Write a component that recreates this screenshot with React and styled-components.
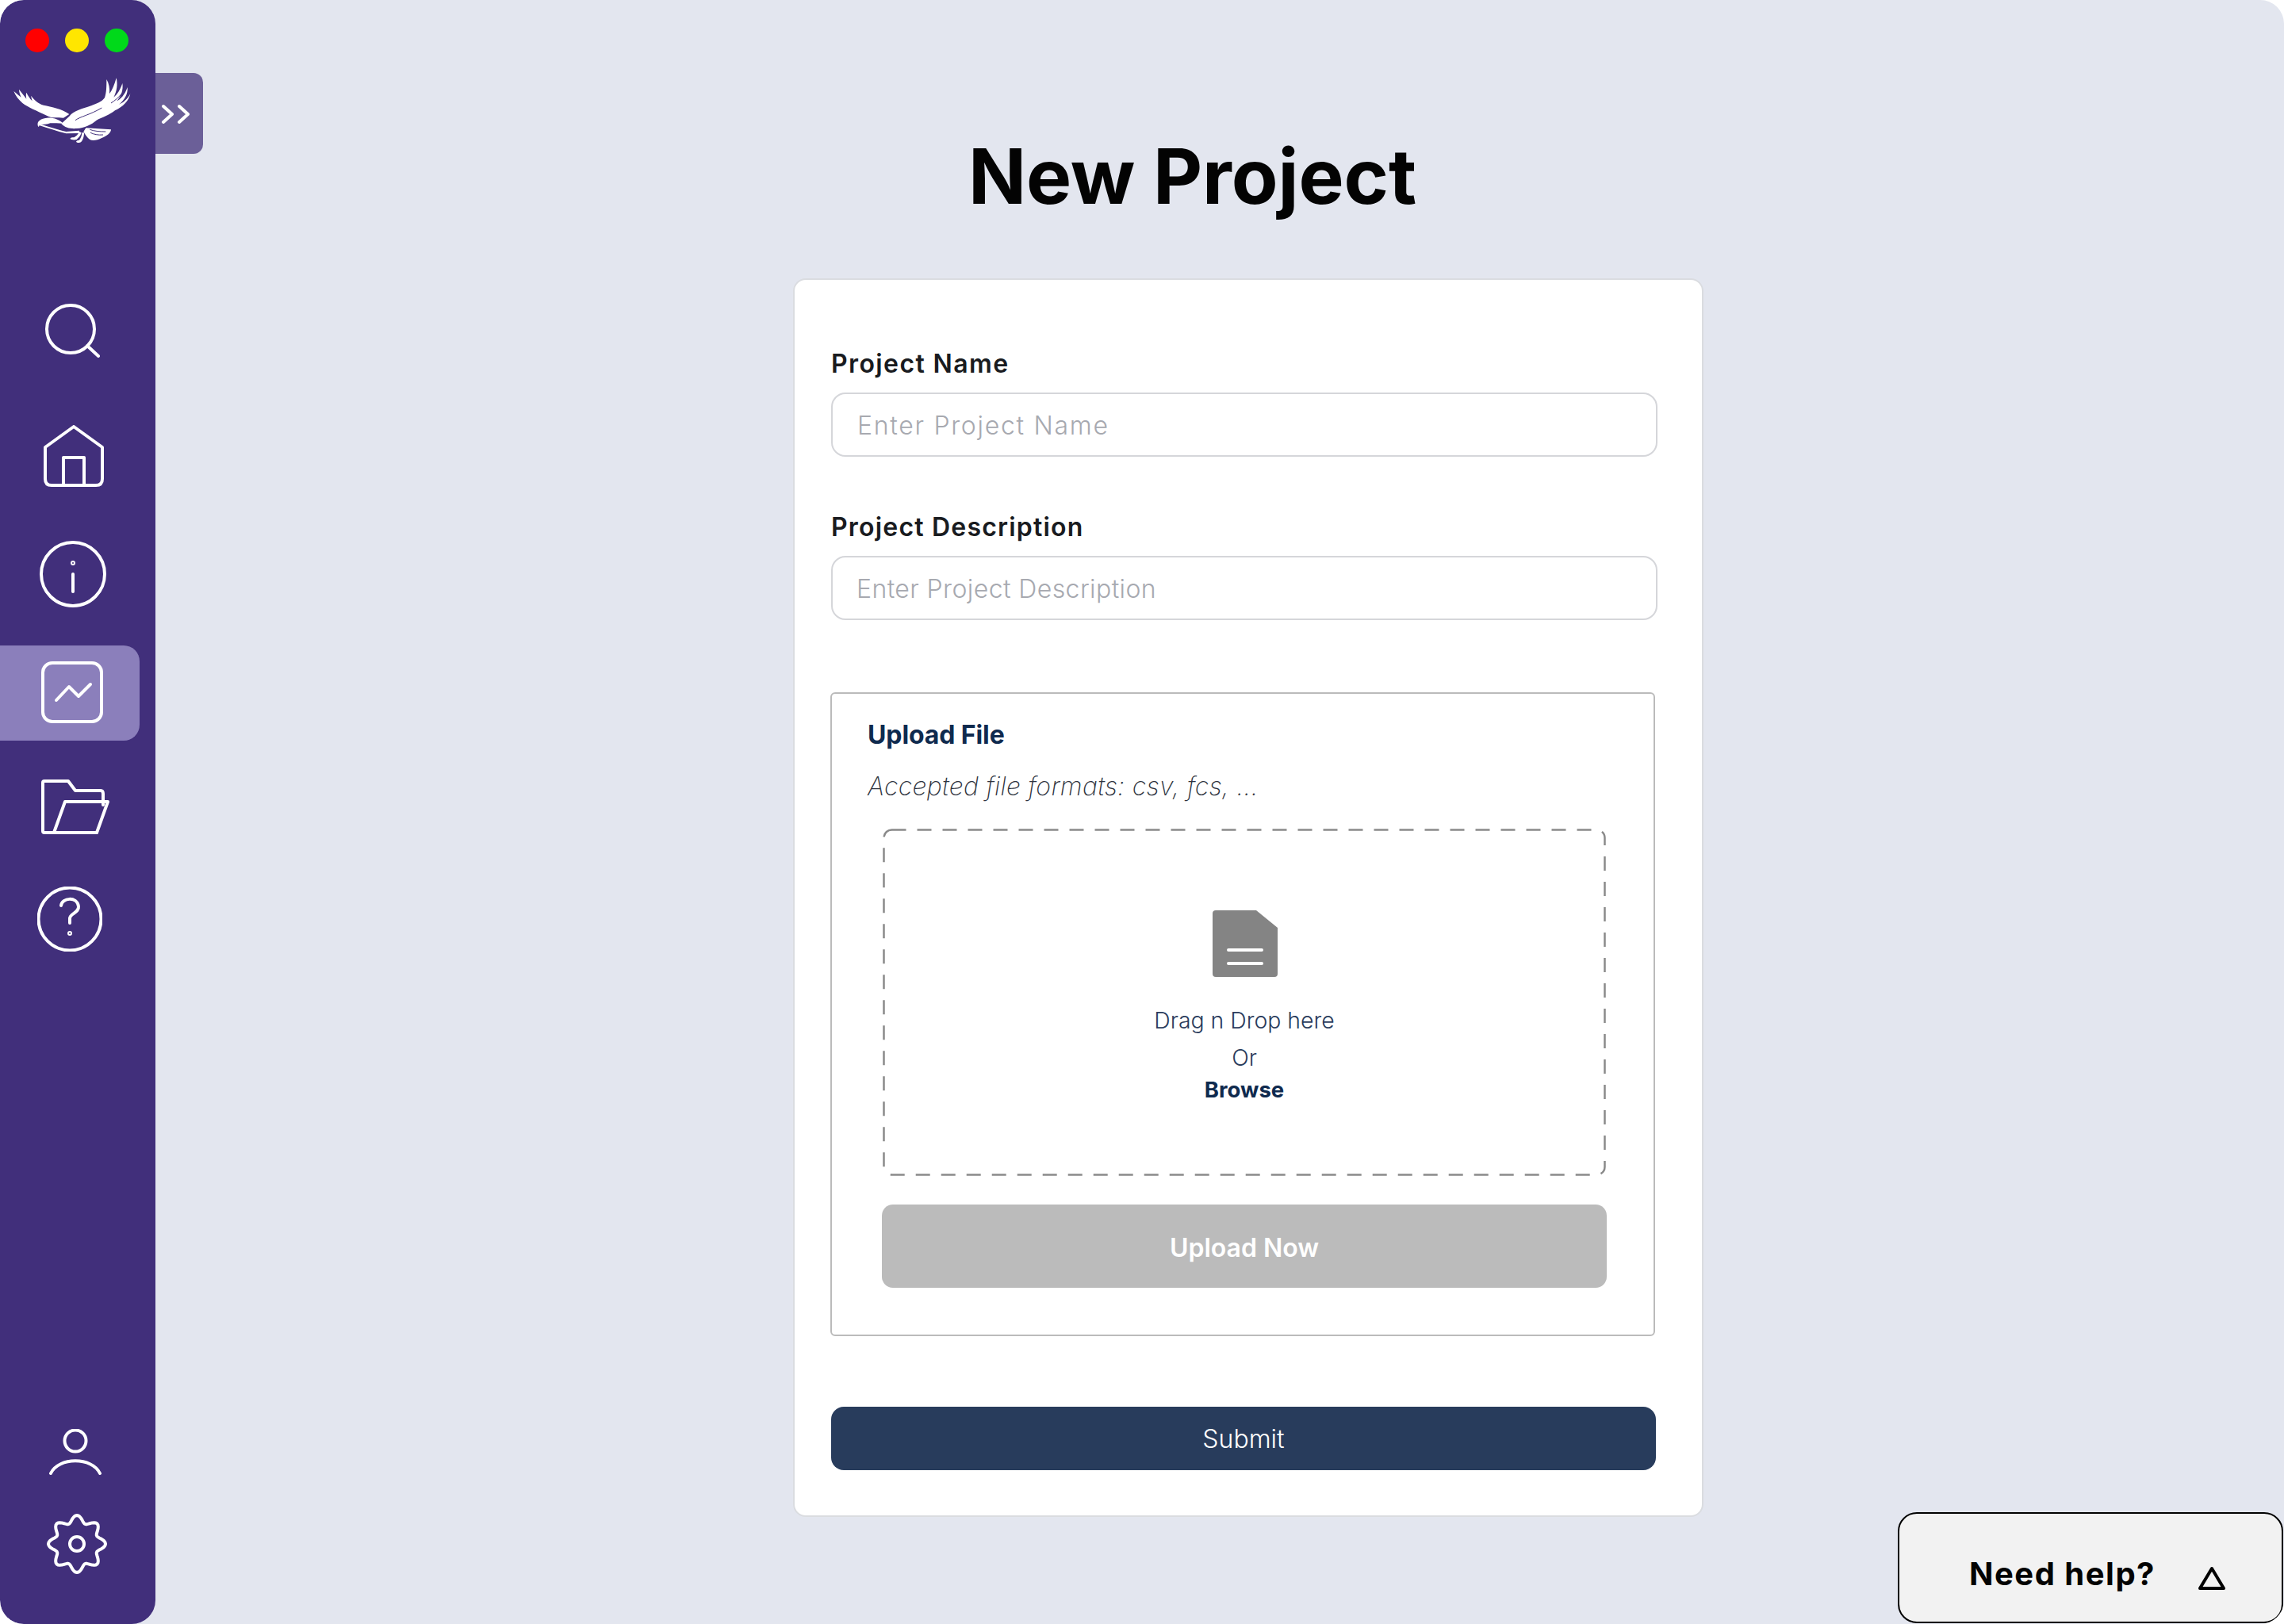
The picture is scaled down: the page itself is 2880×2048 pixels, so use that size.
import React from 'react';
import styled, { createGlobalStyle } from 'styled-components';

const GlobalStyle = createGlobalStyle`
  html, body {
    margin: 0;
    padding: 0;
    background: #fff;
  }
  * {
    box-sizing: border-box;
  }
`;

// Window
const Window = styled.div`
  position: relative;
  display: flex;
  width: 2880px;
  height: 2048px;
  overflow: hidden;
  border-radius: 30px;
  background: #e3e6ef;
  font-family: Inter, "Liberation Sans", sans-serif;
`;

// Sidebar
const Sidebar = styled.aside`
  position: relative;
  display: flex;
  flex-direction: column;
  flex: 0 0 196px;
  height: 100%;
  background: #412f7b;
  border-radius: 30px;
`;

const Lights = styled.div`
  display: flex;
  gap: 20px;
  padding: 36px 0 0 32px;
`;

const Light = styled.span`
  width: 30px;
  height: 30px;
  border-radius: 50%;
  background: ${(p) => p.$color};
`;

const Logo = styled.svg`
  display: block;
  width: 180px;
  height: 110px;
  margin-top: 14px;
`;

const Toggle = styled.button`
  position: absolute;
  top: 92px;
  left: 196px;
  display: flex;
  align-items: center;
  justify-content: center;
  width: 60px;
  height: 102px;
  padding: 2px 10px 0 0;
  border: 0;
  border-radius: 0 12px 12px 0;
  background: #6b5f98;
`;

const Nav = styled.nav`
  display: flex;
  flex-direction: column;
`;

const NavItem = styled.div`
  display: flex;
  align-items: center;
  width: ${(p) => (p.$active ? '176px' : '100%')};
  height: ${(p) => p.$height}px;
  margin-top: ${(p) => p.$gap}px;
  padding-left: ${(p) => p.$left}px;
  border-radius: ${(p) => (p.$active ? '0 20px 20px 0' : '0')};
  background: ${(p) => (p.$active ? '#8b7fbb' : 'transparent')};
`;

const SidebarFoot = styled.div`
  display: flex;
  flex-direction: column;
  margin-top: auto;
  padding-bottom: 61px;
`;

const Icon = styled.svg`
  display: block;
  fill: none;
  stroke: #fff;
  stroke-width: 4;
  stroke-linecap: round;
  stroke-linejoin: round;
  margin-top: ${(p) => p.$nudge || 0}px;
`;

// Main column
const Main = styled.main`
  display: flex;
  flex-direction: column;
  flex: 1;
  padding: 164px 0 0 804px;
`;

const Title = styled.h1`
  margin: 0 0 0 221px;
  font-size: 96px;
  line-height: 116px;
  font-weight: 700;
  letter-spacing: -0.1px;
  color: #030303;
  white-space: nowrap;
`;

const Card = styled.section`
  display: flex;
  flex-direction: column;
  width: 1148px;
  margin-top: 71px;
  padding: 86px 55px 57px 46px;
  background: #fff;
  border: 2px solid #dadce0;
  border-radius: 16px;
`;

const Label = styled.label`
  display: block;
  margin: ${(p) => p.$gap || 0}px 0 16px 0;
  font-size: 32px;
  line-height: 40px;
  font-weight: 600;
  letter-spacing: ${(p) => p.$spacing}px;
  color: #191b20;
`;

const TextInput = styled.input`
  display: block;
  width: 1042px;
  height: 81px;
  padding: 2px 30px 0 ${(p) => p.$left || 30}px;
  background: #fff;
  border: 2px solid #d5d6da;
  border-radius: 18px;
  font-family: inherit;
  font-size: 32px;
  font-weight: 300;
  outline: none;

  &::placeholder {
    color: #a7a9b0;
    opacity: 1;
    letter-spacing: ${(p) => p.$spacing || 0}px;
  }
`;

const UploadBox = styled.div`
  width: 1040px;
  height: 812px;
  margin: 91px 0 0 -1px;
  padding: 32px 0 0;
  border: 2px solid #bbbbbb;
  border-radius: 6px;
`;

const UploadTitle = styled.h2`
  margin: 0 0 0 45px;
  font-size: 32px;
  line-height: 40px;
  font-weight: 700;
  letter-spacing: -0.1px;
  color: #0f2a4e;
`;

const Formats = styled.p`
  margin: 25px 0 0 45px;
  font-size: 32px;
  line-height: 40px;
  font-weight: 200;
  font-style: italic;
  letter-spacing: 0.3px;
  color: #2f3440;
`;

const Dropzone = styled.div`
  position: relative;
  display: flex;
  flex-direction: column;
  align-items: center;
  width: 912px;
  height: 438px;
  margin: 33px 0 0 64px;
  padding-top: 103px;
`;

const DashFrame = styled.svg`
  position: absolute;
  top: 0;
  left: 0;
  width: 912px;
  height: 438px;
`;

const DocIcon = styled.svg`
  display: block;
  margin-left: 2px;
`;

const DropText = styled.div`
  margin-top: ${(p) => p.$gap}px;
  font-size: ${(p) => (p.$bold ? 27.5 : 28.4)}px;
  line-height: 36px;
  font-weight: ${(p) => (p.$bold ? 700 : 300)};
  color: ${(p) => (p.$bold ? '#0f2a4e' : '#2a3c5c')};
`;

const UploadButton = styled.button`
  display: block;
  width: 914px;
  height: 105px;
  margin: 36px 0 0 63px;
  padding-top: 5px;
  border: 0;
  border-radius: 14px;
  background: #bbbbbb;
  color: #fff;
  font-family: inherit;
  font-size: 32px;
  font-weight: 600;
`;

const SubmitButton = styled.button`
  display: block;
  width: 1040px;
  height: 80px;
  margin-top: 89px;
  border: 0;
  border-radius: 16px;
  background: #283c5c;
  color: #fff;
  font-family: inherit;
  font-size: 32px;
  font-weight: 300;
`;

// Need help widget
const HelpBox = styled.div`
  position: absolute;
  top: 1907px;
  left: 2393px;
  display: flex;
  align-items: center;
  width: 486px;
  height: 140px;
  padding: 14px 0 0 88px;
  background: #f2f2f2;
  border: 2px solid #000;
  border-radius: 24px;
`;

const HelpText = styled.span`
  font-size: 40px;
  font-weight: 700;
  letter-spacing: 1.5px;
  color: #030303;
`;

const HelpArrow = styled.svg`
  display: block;
  margin: 12px 0 0 53px;
  fill: none;
  stroke: #000;
  stroke-width: 4;
  stroke-linejoin: round;
`;

// 8 lobed gear outline
const gearPath = () => {
  const points = [];
  for (let i = 0; i < 120; i++) {
    const angle = (i / 120) * Math.PI * 2;
    const radius = 31.5 + 4.5 * Math.cos(8 * angle);
    const x = 40 + radius * Math.sin(angle);
    const y = 40 - radius * Math.cos(angle);
    points.push(`${x.toFixed(2)} ${y.toFixed(2)}`);
  }
  return `M${points.join('L')}Z`;
};

function Eagle() {
  return (
    <Logo viewBox="0 0 540 330" aria-label="logo">
      <g fill="#fff">
        <path d="M232 228L262 200C280 178 310 172 345 160C365 152 385 146 396 130C403 110 403 85 403 60C412 75 416 95 414 115C425 100 433 80 440 55C446 80 442 105 430 128C443 118 455 100 463 75C467 100 458 125 442 142C455 136 472 120 482 90C485 115 470 140 450 155C465 150 482 135 493 115C488 140 465 165 435 178C415 195 385 205 365 215C345 232 320 244 290 246C270 248 245 244 232 228Z" />
        <path d="M52 105C60 112 70 120 80 128C76 118 72 108 72 98C82 110 90 122 100 134C98 125 98 115 100 110C106 122 112 132 122 142C120 135 118 128 118 122C128 138 145 152 165 158C195 164 235 172 262 192L240 206C215 205 195 208 178 198C140 180 105 165 85 150C70 137 58 122 52 105Z" />
        <path d="M143 225C146 214 160 208 178 206C200 204 225 212 240 228C220 226 205 226 190 226C178 232 165 230 150 232C149 236 148 238 146 240C142 236 142 230 143 225Z" />
        <path d="M150 230C180 236 215 250 250 258L300 254L300 264L250 265C215 257 180 244 150 235Z" />
        <path d="M325 244L420 250C420 262 405 275 385 282C370 290 350 294 340 288C330 282 322 268 316 258Z" />
        <path d="M308 262C304 275 296 282 290 288C284 290 270 290 266 286C264 282 270 278 280 280C288 276 296 268 300 258ZM318 262C318 280 312 292 306 298C300 302 290 300 288 296C288 292 296 290 300 290C306 282 310 272 310 262Z" />
      </g>
      <g fill="none" stroke="#412f7b" strokeWidth="3">
        <path d="M285 215C305 200 340 195 385 168" />
        <path d="M340 250C355 256 375 258 400 258M342 262C355 268 370 272 390 270" />
        <path d="M420 150C435 140 450 128 462 112" />
      </g>
    </Logo>
  );
}

function App() {
  return (
    <Window>
      <GlobalStyle />
      <Sidebar>
        <Lights>
          <Light $color="#ff0000" />
          <Light $color="#ffe600" />
          <Light $color="#00d91a" />
        </Lights>
        <Eagle />
        <Toggle aria-label="Expand sidebar">
          <Icon width="36" height="26" viewBox="0 0 36 26">
            <path d="M3 3L14 13L3 23M23 3L34 13L23 23" />
          </Icon>
        </Toggle>
        <Nav>
          <NavItem $height={68} $gap={193} $left={56}>
            <Icon width="70" height="68" viewBox="0 0 70 68">
              <circle cx="33" cy="32" r="30" />
              <path d="M54 53L68 66" />
            </Icon>
          </NavItem>
          <NavItem $height={78} $gap={85} $left={55}>
            <Icon width="76" height="78" viewBox="0 0 76 78">
              <path d="M38 2L74 28V68Q74 76 66 76H10Q2 76 2 68V28Z" />
              <path d="M25 76V41H51V76" />
            </Icon>
          </NavItem>
          <NavItem $height={84} $gap={68} $left={50}>
            <Icon width="84" height="84" viewBox="0 0 84 84">
              <circle cx="42" cy="42" r="40" />
              <circle cx="42" cy="28" r="1" />
              <path d="M42 42V64" />
            </Icon>
          </NavItem>
          <NavItem $active $height={120} $gap={48} $left={52}>
            <Icon width="78" height="78" viewBox="0 0 78 78" $nudge={-2}>
              <rect x="2" y="2" width="74" height="74" rx="12" />
              <path d="M19 49L35 32L47 44L62 29" />
            </Icon>
          </NavItem>
          <NavItem $height={70} $gap={48} $left={52}>
            <Icon width="86" height="70" viewBox="0 0 86 70">
              <path d="M78 33V19Q78 15 75 15H43L34 3H4Q2 3 2 5V66Q2 68 4 68H70" />
              <path d="M16 68L30 29H84L70 68Z" />
            </Icon>
          </NavItem>
          <NavItem $height={82} $gap={66} $left={47}>
            <Icon width="82" height="82" viewBox="0 0 82 82">
              <circle cx="41" cy="41" r="39.5" />
              <path d="M30 24C31 14 50 12 52 25C53 33 41 34 41 40V46" />
              <circle cx="41" cy="59" r="1" />
            </Icon>
          </NavItem>
        </Nav>
        <SidebarFoot>
          <NavItem $height={58} $gap={0} $left={62}>
            <Icon width="66" height="58" viewBox="0 0 66 58">
              <circle cx="33" cy="15" r="13.5" />
              <path d="M2 56C12 35 54 35 64 56" />
            </Icon>
          </NavItem>
          <NavItem $height={80} $gap={47} $left={57}>
            <Icon width="80" height="80" viewBox="0 0 80 80">
              <path d={gearPath()} />
              <circle cx="40" cy="40" r="9" />
            </Icon>
          </NavItem>
        </SidebarFoot>
      </Sidebar>

      <Main>
        <Title>New Project</Title>
        <Card>
          <Label $spacing={1.4}>Project Name</Label>
          <TextInput placeholder="Enter Project Name" $spacing={1.7} $left={31} />
          <Label $gap={69} $spacing={1.2}>Project Description</Label>
          <TextInput placeholder="Enter Project Description" $spacing={0.4} />
          <UploadBox>
            <UploadTitle>Upload File</UploadTitle>
            <Formats>Accepted file formats: csv, fcs, ...</Formats>
            <Dropzone>
              <DashFrame viewBox="0 0 912 438">
                <rect x="1.5" y="1.5" width="909" height="435" rx="10" fill="none" stroke="#8a8a8a" strokeWidth="2.5" strokeDasharray="18 14" />
              </DashFrame>
              <DocIcon width="82" height="84" viewBox="0 0 82 84">
                <path d="M4 0H55L82 22V80Q82 84 78 84H4Q0 84 0 80V4Q0 0 4 0Z" fill="#848484" />
                <path d="M20 50H62M20 67H62" stroke="#fff" strokeWidth="4" strokeLinecap="round" />
              </DocIcon>
              <DropText $gap={37}>Drag n Drop here</DropText>
              <DropText $gap={11}>Or</DropText>
              <DropText $gap={4} $bold>Browse</DropText>
            </Dropzone>
            <UploadButton>Upload Now</UploadButton>
          </UploadBox>
          <SubmitButton>Submit</SubmitButton>
        </Card>
      </Main>

      <HelpBox>
        <HelpText>Need help?</HelpText>
        <HelpArrow width="36" height="31" viewBox="0 0 36 31">
          <path d="M18 3L33 28H3Z" />
        </HelpArrow>
      </HelpBox>
    </Window>
  );
}

export default App;
